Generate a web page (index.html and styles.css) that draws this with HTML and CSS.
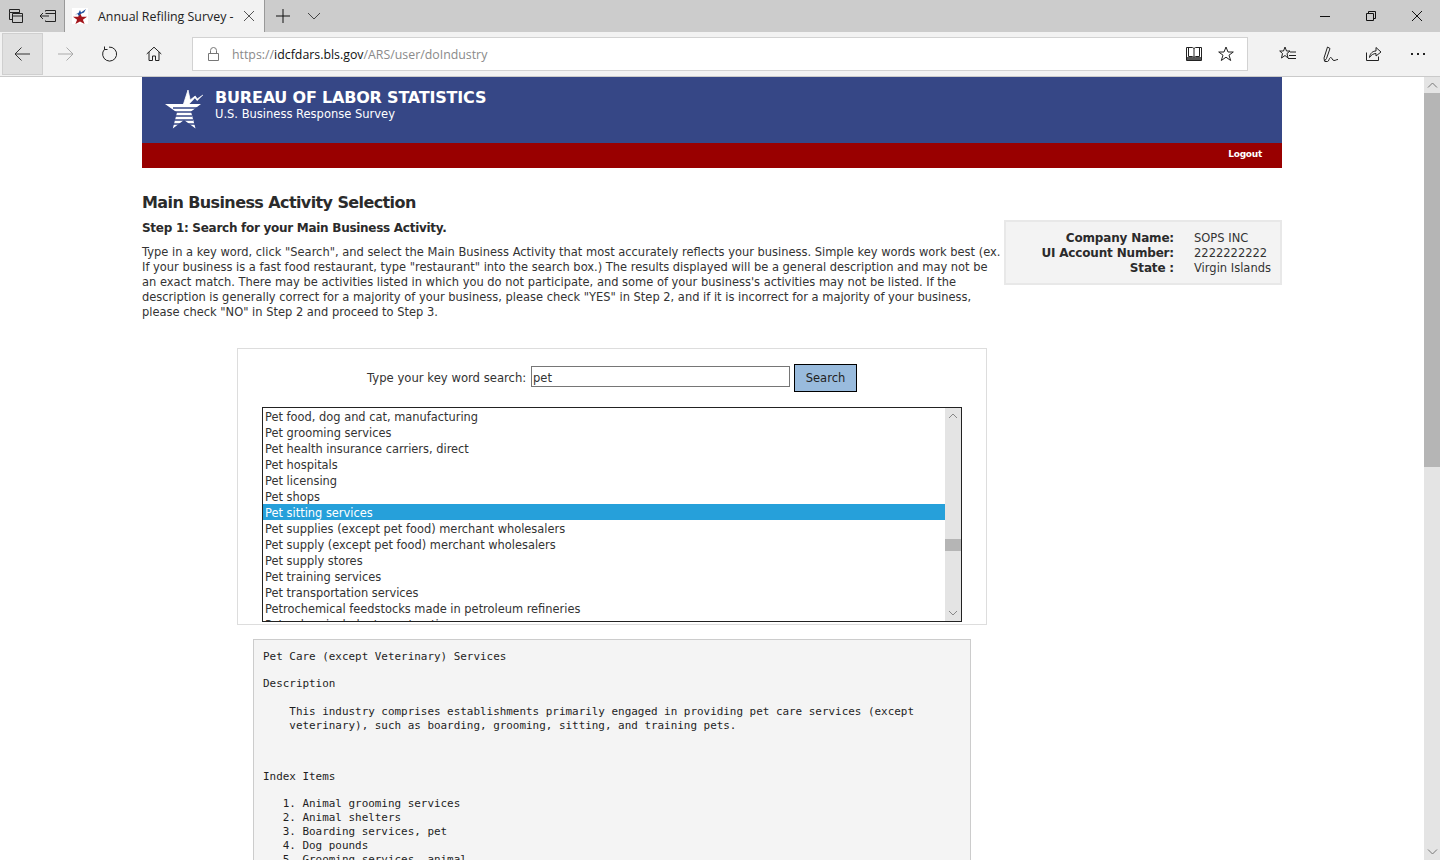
FILE: index.html
```html
<!DOCTYPE html>
<html lang="en">
<head>
<meta charset="utf-8">
<title>Annual Refiling Survey</title>
<link rel="stylesheet" href="styles.css">
</head>
<body>
<div class="window">
  <div class="tabbar">
    <button class="tb-btn first"><svg width="16" height="16" viewBox="0 0 16 16"><path class="ln" d="M1.5 1.5h10v3h-10zM1.5 4.500v7h3M11.500 4.500v1"/><path class="ln" d="M4.500 5.500h10v9h-10zM4.500 8h10"/></svg></button>
    <button class="tb-btn second"><svg width="18" height="14" viewBox="0 0 18 14"><path class="ln" d="M6.500 2.500v-1h10v11h-10v-1M6.500 4.500h10M1 7h9M4 4L1 7l3 3"/></svg></button>
    <div class="tab">
      <svg class="favicon" width="16" height="16" viewBox="0 0 16 16"><rect width="16" height="16" fill="#fff"/><path d="M8 5l1.800 3.800H15l-4.100 2.900 1.700 4.300L8 13.400 3.400 16l1.700-4.300L1 8.800h5.200z" fill="#a3161c"/><path d="M3 6.500l3.500-1.500 1.500-3 1 2.500 5-3.500-2 3.500-3.500 1.500-1.500 2-1.500-2z" fill="#1f4d9c"/></svg>
      <span class="tab-title">Annual Refiling Survey -</span>
      <svg class="tab-close" width="12" height="12" viewBox="0 0 12 12"><path d="M1 1l10 10M11 1L1 11" stroke="#555" fill="none"/></svg>
    </div>
    <svg class="plus" width="14" height="14" viewBox="0 0 14 14"><path d="M7 0v14M0 7h14" stroke="#111" fill="none"/></svg>
    <svg class="chev" width="14" height="8" viewBox="0 0 14 8"><path d="M1 1l6 6 6-6" stroke="#444" fill="none"/></svg>
    <div class="win-ctrls">
      <svg width="12" height="12" viewBox="0 0 12 12"><path d="M1 6.500h10" stroke="#111" fill="none"/></svg>
      <svg width="12" height="12" viewBox="0 0 12 12"><path d="M1.500 3.500h7v7h-7zM3.500 3.500v-2h7v7h-2" stroke="#111" fill="none"/></svg>
      <svg width="12" height="12" viewBox="0 0 12 12"><path d="M1 1l10 10M11 1L1 11" stroke="#111" fill="none"/></svg>
    </div>
  </div>
  <div class="toolbar">
    <button class="nav-btn active"><svg class="back" width="16" height="14" viewBox="0 0 16 14"><path d="M16 7H1M7.500.5L1 7l6.500 6.500" stroke="#333" fill="none"/></svg></button>
    <button class="nav-btn"><svg width="16" height="14" viewBox="0 0 16 14"><path d="M0 7h15M8.500.5L15 7l-6.500 6.500" stroke="#aaa" fill="none"/></svg></button>
    <button class="nav-btn"><svg width="16" height="16" viewBox="0 0 16 16"><path d="M7 1.100a7 7 0 1 1-4.500 2.200M2.500.5v3h3" stroke="#222" fill="none"/></svg></button>
    <button class="nav-btn"><svg width="16" height="16" viewBox="0 0 16 16"><path d="M.7 8L8 1.200 15.300 8M3 6v8.500h3.500V10h3v4.500H13V6" stroke="#222" fill="none"/></svg></button>
    <div class="address">
      <svg class="lock" width="11" height="14" viewBox="0 0 11 14"><path d="M.5 6.500h10v7H.5zM2.500 6.500V3.500a3 3 0 0 1 6 0v3" stroke="#777" fill="none"/></svg>
      <span class="url"><span class="url-dim">https://</span>idcfdars.bls.gov<span class="url-dim">/ARS/user/doIndustry</span></span>
      <svg class="addr-icon book" width="16" height="16" viewBox="0 0 16 16"><path d="M.5 1.500h6L8 2.500l1.500-1h6v13h-15zM8 2.500v11M2.500 1.500v9h4L8 11.500l1.500-1h4v-9" stroke="#222" fill="none"/><path d="M1 11h5.500L8 12l1.500-1H15v3H1z" fill="#555"/></svg>
      <svg class="addr-icon star" width="16" height="16" viewBox="0 0 16 16"><path d="M8 1l2 5h5.300l-4.300 3.200 1.700 5.300L8 11.200l-4.700 3.300L5 9.200.7 6H6z" stroke="#222" fill="none"/></svg>
    </div>
    <div class="tools">
      <svg width="18" height="16" viewBox="0 0 18 16"><path d="M6 1l1.500 4H11L8 7.500 9 12l-3-2.500L2.500 12l1-4.500L.7 5h3.800zM11 6h6M10 9.500h7M9 12.500h8" stroke="#222" fill="none"/></svg>
      <svg width="16" height="17" viewBox="0 0 16 17"><path d="M4.500 1L7 2.500 3.500 12.500l-2 2.500-.5-3zM1.500 15.500h3C6 15.500 6 12 7.500 11.500s1.500 3 3.500 3 2-1 4-1" stroke="#222" fill="none"/></svg>
      <svg width="17" height="16" viewBox="0 0 17 16"><path d="M1.500 6.500v8h12v-4M4.500 11.500C5 7 8 5 11 5V1.500L16 6l-5 4V7.500C8.500 7.500 6 9 4.500 11.500z" stroke="#222" fill="none"/></svg>
      <svg width="14" height="2" viewBox="0 0 14 2"><path d="M0 0h2v2H0zM6 0h2v2H6zM12 0h2v2h-2z" fill="#222"/></svg>
    </div>
  </div>
  <div class="viewport">
    <main class="page">
      <header class="banner">
        <div class="banner-top">
          <svg class="logo" width="39" height="41" viewBox="0 0 39 41">
            <path d="M0 15h18.500L23 1l2.200 10 5-4 2 3 5.800-4-5.800 6-2.300-2.800-5.400 5.800H36l-10 7.500 4.500 17L19 31 7.800 39.500 12 23.500z" fill="#fff"/>
            <path d="M18.500 15L23 1l2.200 10 5-4 2 3 5.800-4" stroke="#fff" stroke-width=".8" fill="none"/>
            <path d="M8 19h24M10 23h18M11 27h16M10 31h18M8 35h8M22 35h8" stroke="#364786" stroke-width="1.300" fill="none"/>
          </svg>
          <div class="brand">
            <div class="brand-name">BUREAU OF LABOR STATISTICS</div>
            <div class="brand-sub">U.S. Business Response Survey</div>
          </div>
        </div>
        <div class="banner-bar"><a class="logout">Logout</a></div>
      </header>
      <h1 class="title">Main Business Activity Selection</h1>
      <div class="intro-row">
        <div class="intro">
          <h2 class="step">Step 1: Search for your Main Business Activity.</h2>
          <p class="instructions">Type in a key word, click "Search", and select the Main Business Activity that most accurately reflects your business. Simple key words work best (ex. If your business is a fast food restaurant, type "restaurant" into the search box.) The results displayed will be a general description and may not be an exact match. There may be activities listed in which you do not participate, and some of your business's activities may not be listed. If the description is generally correct for a majority of your business, please check "YES" in Step 2, and if it is incorrect for a majority of your business, please check "NO" in Step 2 and proceed to Step 3.</p>
        </div>
        <dl class="company">
          <dt>Company Name:</dt><dd>SOPS INC</dd>
          <dt>UI Account Number:</dt><dd>2222222222</dd>
          <dt>State :</dt><dd>Virgin Islands</dd>
        </dl>
      </div>
      <div class="work">
        <section class="search-panel">
          <div class="search-row">
            <label class="search-label">Type your key word search:</label>
            <div class="search-input">pet</div>
            <button class="search-btn">Search</button>
          </div>
          <div class="listbox">
            <ul class="options">
              <li>Pet food, dog and cat, manufacturing</li>
              <li>Pet grooming services</li>
              <li>Pet health insurance carriers, direct</li>
              <li>Pet hospitals</li>
              <li>Pet licensing</li>
              <li>Pet shops</li>
              <li class="selected">Pet sitting services</li>
              <li>Pet supplies (except pet food) merchant wholesalers</li>
              <li>Pet supply (except pet food) merchant wholesalers</li>
              <li>Pet supply stores</li>
              <li>Pet training services</li>
              <li>Pet transportation services</li>
              <li>Petrochemical feedstocks made in petroleum refineries</li>
              <li>Petrochemical plant construction</li>
            </ul>
            <div class="list-scroll">
              <svg class="sb-arrow" width="10" height="6" viewBox="0 0 10 6"><path d="M1 5l4-4 4 4" stroke="#888" fill="none"/></svg>
              <div class="list-thumb"></div>
              <svg class="sb-arrow" width="10" height="6" viewBox="0 0 10 6"><path d="M1 1l4 4 4-4" stroke="#888" fill="none"/></svg>
            </div>
          </div>
        </section>
        <section class="desc">
          <div class="desc-title">Pet Care (except Veterinary) Services</div>
          <div class="desc-head">Description</div>
          <pre class="desc-body">    This industry comprises establishments primarily engaged in providing pet care services (except
    veterinary), such as boarding, grooming, sitting, and training pets.</pre>
          <div class="desc-index">Index Items</div>
          <pre class="desc-list">   1. Animal grooming services
   2. Animal shelters
   3. Boarding services, pet
   4. Dog pounds
   5. Grooming services, animal
   6. Kennels, pet boarding</pre>
        </section>
      </div>
    </main>
    <aside class="scrollbar">
      <div class="sb-btn"><svg width="11" height="6" viewBox="0 0 11 6"><path d="M1 5.500l4.500-4.500 4.500 4.500" stroke="#777" fill="none"/></svg></div>
      <div class="sb-thumb"></div>
      <div class="sb-track"></div>
      <div class="sb-btn"><svg width="11" height="6" viewBox="0 0 11 6"><path d="M1 .5L5.500 5 10 .5" stroke="#777" fill="none"/></svg></div>
    </aside>
  </div>
</div>
</body>
</html>
```

FILE: styles.css
```css
* { box-sizing: border-box; }
html, body { margin: 0; height: 100%; overflow: hidden; background: #fff; }
button { font: inherit; padding: 0; background: none; border: 0; }
svg { display: block; flex: none; }
.ln { stroke: #222; fill: none; }

.window { width: 1440px; height: 860px; display: flex; flex-direction: column; overflow: hidden; }

.tabbar { height: 32px; flex: none; background: #cccccc; display: flex; align-items: center; }
.tb-btn { display: flex; align-items: center; justify-content: center; width: 32px; height: 32px; }
.tab { width: 201px; height: 32px; background: #f2f2f2; border-left: 1px solid #999; border-right: 1px solid #999; display: flex; align-items: center; font: 12.400px "Open Sans", sans-serif; color: #222; }
.favicon { margin-left: 7px; }
.tab-title { margin-left: 10px; white-space: nowrap; width: 146px; }
.tab-close { margin-left: -1px; }
.plus { margin-left: 11px; }
.chev { margin-left: 17px; }
.win-ctrls { margin-left: auto; display: flex; align-items: center; gap: 34px; padding-right: 17px; }

.toolbar { height: 45px; flex: none; background: #f2f2f2; border-bottom: 1px solid #cacaca; display: flex; align-items: center; padding-left: 2px; }
.nav-btn { width: 44px; height: 42px; display: flex; align-items: center; justify-content: center; border: 1px solid transparent; }
.nav-btn.active { width: 41px; margin-right: 1px; background: #e0e0e0; border-color: #cfcfcf; }
.back { margin-right: 1px; }
.address { width: 1056px; height: 34px; margin-left: 16px; background: #fff; border: 1px solid #d2d2d2; display: flex; align-items: center; padding-left: 15px; }
.lock { margin-right: 13px; }
.url { font: 12.350px "Open Sans", sans-serif; color: #111; white-space: nowrap; flex: 1; }
.url-dim { color: #8a8a8a; }
.book { margin-right: 16px; }
.star { margin-right: 13px; }
.tools { display: flex; align-items: center; margin-left: 31px; gap: 26px; }
.tools svg:last-child { margin-left: 3px; }

.viewport { flex: 1; min-height: 0; display: flex; }
.page { flex: 1; min-width: 0; overflow: hidden; padding: 0 142px; font-family: "DejaVu Sans", Verdana, sans-serif; font-size: 11.500px; line-height: 15px; color: #333; }

.banner-top { height: 66px; background: #364786; display: flex; align-items: flex-start; padding: 12px 0 0 23px; }
.logo { margin-right: 11px; }
.brand { color: #fff; }
.brand-name { font-size: 16px; font-weight: bold; line-height: 18px; letter-spacing: -0.2px; white-space: nowrap; }
.brand-sub { font-size: 11.500px; line-height: 15px; white-space: nowrap; }
.banner-bar { height: 25px; background: #990000; display: flex; align-items: center; justify-content: flex-end; padding: 0 20px 3px 0; }
.logout { color: #fff; font-size: 9px; font-weight: bold; letter-spacing: -0.25px; }

.title { margin: 25px 0 0; font-size: 16px; line-height: 20px; font-weight: bold; letter-spacing: -0.6px; color: #2b2b2b; }
.intro-row { display: flex; align-items: flex-start; margin-top: 7px; }
.intro { width: 862px; flex: none; padding-top: 1px; font-size: 11.460px; }
.step { margin: 0; font-size: 12px; line-height: 15px; font-weight: bold; letter-spacing: -0.28px; color: #2b2b2b; }
.instructions { margin: 9px 0 0; }
.company { width: 278px; height: 65px; margin: 0; flex: none; background: #f3f3f3; border: 2px solid #e8e8e8; display: grid; grid-template-columns: 168px 1fr; column-gap: 20px; padding: 9px 0 0; align-content: start; }
.company dt { font-weight: bold; text-align: right; white-space: nowrap; color: #2b2b2b; font-size: 12px; letter-spacing: -0.17px; }
.company dd { margin: 0; white-space: nowrap; }

.work { width: 750px; margin: 28px 0 0 95px; }
.search-panel { height: 277px; border: 1px solid #dddddd; overflow: hidden; padding: 15px 24px 0; }
.search-row { display: flex; align-items: flex-start; height: 28px; padding-left: 105px; }
.search-label { white-space: nowrap; width: 164px; font-size: 11.650px; line-height: 29px; }
.search-input { width: 259px; height: 21px; margin-top: 2px; border: 1px solid #767676; padding: 0 1px; line-height: 22px; }
.search-btn { width: 63px; height: 28px; margin-left: 4px; padding-top: 1px; background: #99bbdd; border: 1px solid #000; color: #222; font-size: 11.500px; }
.listbox { width: 700px; height: 215px; margin-top: 15px; border: 1px solid #222; display: flex; overflow: hidden; }
.options { list-style: none; margin: 0; padding: 0; flex: 1; min-width: 0; overflow: hidden; font-size: 11.420px; }
.options li { height: 16px; padding: 2px 0 0 2px; line-height: 15px; white-space: nowrap; }
.options li.selected { background: #26a0da; color: #fff; }
.list-scroll { width: 16px; flex: none; background: #e4e4e4; display: flex; flex-direction: column; align-items: stretch; padding: 5px 0; }
.sb-arrow { align-self: center; }
.list-thumb { height: 12px; margin-top: 120px; background: #b5b5b5; margin-bottom: auto; }

.desc { width: 718px; height: 400px; margin: 14px auto 0; background: #f4f4f4; border: 1px solid #cccccc; padding: 10px 9px; font-family: "DejaVu Sans Mono", "Liberation Mono", monospace; font-size: 10.930px; line-height: 14px; color: #1e1e1e; }
.desc pre { font: inherit; margin: 0; }
.desc-head { margin-top: 13px; }
.desc .desc-body { margin-top: 14px; }
.desc-index { margin-top: 37px; }
.desc .desc-list { margin-top: 13px; }

.scrollbar { width: 16px; flex: none; display: flex; flex-direction: column; background: #e4e4e4; }
.sb-btn { height: 16px; flex: none; display: flex; align-items: center; justify-content: center; }
.sb-thumb { height: 374px; flex: none; background: #b5b5b5; }
.sb-track { flex: 1; }
```
